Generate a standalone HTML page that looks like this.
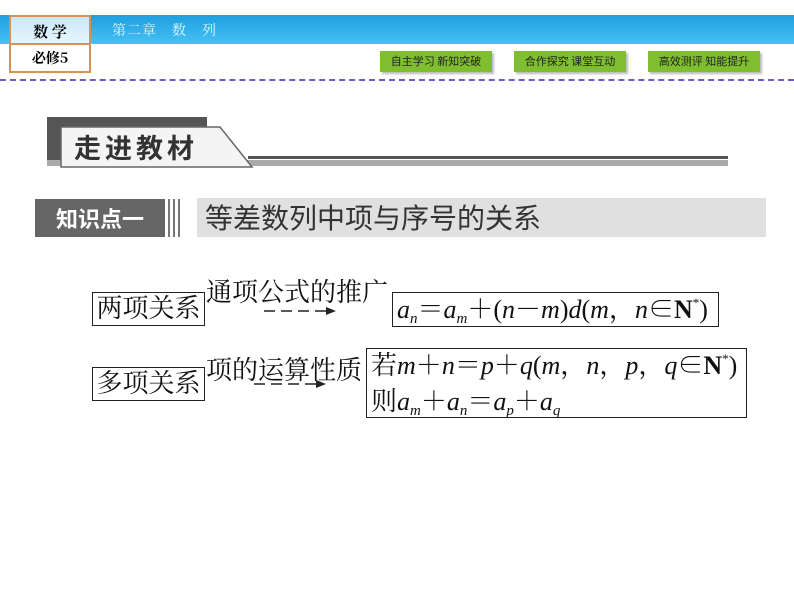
<!DOCTYPE html>
<html><head><meta charset="utf-8"><style>
body{margin:0;width:794px;height:596px;background:#fff;position:relative;overflow:hidden;font-family:"Liberation Serif","Noto Serif CJK SC",serif}
.a{position:absolute}
.bar{left:0;top:15px;width:794px;height:29px;background:linear-gradient(#1e9fe0,#47c0f3)}
.btn{top:51px;width:112px;height:21px;background:#7fbf2f;box-shadow:2px 2px 2px #bbb;font:11px "Noto Sans CJK SC",sans-serif;color:#222;text-align:center;line-height:21px}
.cj{font-family:"Liberation Serif","Noto Serif CJK SC",serif;font-size:26px;color:#111}
.bx{border:1.5px solid #222;box-sizing:border-box}
i{font-style:italic}
sub{font-size:15px;vertical-align:baseline;position:relative;top:5px;font-style:italic}
sup{font-size:13px;vertical-align:baseline;position:relative;top:-11px}
</style></head><body>
<div class="a bar"></div>
<div class="a" style="left:9px;top:15px;width:82px;height:58px;border:2px solid #d9915a;box-sizing:border-box;background:#fff"></div>
<div class="a" style="left:11px;top:17px;width:78px;height:26px;background:linear-gradient(#c8e8f8,#e8f6fc);border-bottom:2px solid #d9915a;text-align:center;font:bold 15px 'Noto Serif CJK SC',serif;line-height:30px">数 学</div>
<div class="a" style="left:11px;top:45px;width:78px;height:26px;text-align:center;font:bold 14px 'Noto Serif CJK SC',serif;line-height:27px">必修5</div>
<div class="a" style="left:112px;top:20px;color:#e6f6ff;font:14px 'Noto Serif CJK SC',serif;letter-spacing:1px">第二章　数　列</div>
<div class="a btn" style="left:380px">自主学习 新知突破</div>
<div class="a btn" style="left:514px">合作探究 课堂互动</div>
<div class="a btn" style="left:648px">高效测评 知能提升</div>
<div class="a" style="left:0;top:79px;width:794px;border-top:2px dashed #6a5acd"></div>
<div class="a" style="left:47px;top:117px;width:160px;height:48px;background:#555"></div>
<div class="a" style="left:47px;top:160px;width:681px;height:6px;background:#aaa"></div>
<div class="a" style="left:248px;top:156px;width:480px;height:3px;background:#555"></div>
<svg class="a" style="left:60px;top:126px" width="195" height="42"><polygon points="1,1 160,1 192,41 1,41" fill="#f4f4f4" stroke="#666" stroke-width="1.5"/></svg>
<div class="a" style="left:74px;top:127px;font:bold 27px 'Noto Sans CJK SC',sans-serif;color:#333;letter-spacing:4px">走进教材</div>
<div class="a" style="left:35px;top:199px;width:130px;height:38px;background:#666;color:#fff;font:bold 22px 'Noto Sans CJK SC',sans-serif;line-height:38px;text-align:center">知识点一</div>
<div class="a" style="left:168px;top:199px;width:2px;height:38px;background:#777"></div>
<div class="a" style="left:173px;top:199px;width:2px;height:38px;background:#777"></div>
<div class="a" style="left:178px;top:199px;width:2px;height:38px;background:#777"></div>
<div class="a" style="left:197px;top:198px;width:569px;height:39px;background:#e0e0e0;font:28px 'Noto Sans CJK SC',sans-serif;color:#333;line-height:39px;padding-left:8px;box-sizing:border-box;white-space:nowrap">等差数列中项与序号的关系</div>
<div class="a bx cj" style="left:92px;top:292px;width:113px;height:34px;line-height:32px;text-align:center">两项关系</div>
<div class="a cj" style="left:206px;top:272px">通项公式的推广</div>
<svg class="a" style="left:262px;top:305px" width="75" height="12"><line x1="2" y1="6" x2="66" y2="6" stroke="#222" stroke-width="1.5" stroke-dasharray="11,6"/><polygon points="74,6 64,2 64,10" fill="#222"/></svg>
<div class="a bx cj" style="left:392px;top:292px;width:327px;height:35px;line-height:33px;padding-left:4px;white-space:nowrap"><i>a</i><sub>n</sub>＝<i>a</i><sub>m</sub>＋(<i>n</i>－<i>m</i>)<i>d</i>(<i>m</i>，<i>n</i>∈<b>N</b><sup>*</sup>)</div>
<div class="a bx cj" style="left:92px;top:367px;width:113px;height:34px;line-height:32px;text-align:center">多项关系</div>
<div class="a cj" style="left:206px;top:350px">项的运算性质</div>
<svg class="a" style="left:252px;top:378px" width="75" height="12"><line x1="2" y1="6" x2="66" y2="6" stroke="#222" stroke-width="1.5" stroke-dasharray="11,6"/><polygon points="74,6 64,2 64,10" fill="#222"/></svg>
<div class="a bx cj" style="left:366px;top:348px;width:381px;height:70px;line-height:32px;padding:1px 0 0 4px;white-space:nowrap">若<i>m</i>＋<i>n</i>＝<i>p</i>＋<i>q</i>(<i>m</i>，<i>n</i>，<i>p</i>，<i>q</i>∈<b>N</b><sup>*</sup>)<br>则<i>a</i><sub>m</sub>＋<i>a</i><sub>n</sub>＝<i>a</i><sub>p</sub>＋<i>a</i><sub>q</sub></div>
</body></html>
